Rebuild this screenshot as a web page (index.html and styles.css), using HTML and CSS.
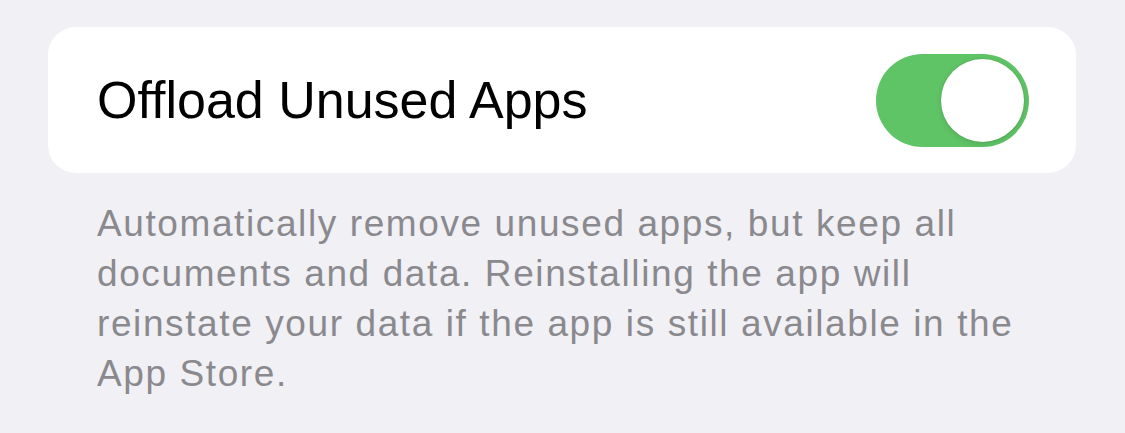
FILE: index.html
```html
<!DOCTYPE html>
<html lang="en">
<head>
<meta charset="UTF-8">
<title>Offload Unused Apps</title>
<link rel="stylesheet" href="styles.css">
</head>
<body>
<div class="page">
  <div class="card">
    <div class="row">
      <span class="label">Offload Unused Apps</span>
      <div class="toggle on"><div class="knob"></div></div>
    </div>
  </div>
  <p class="footer">Automatically remove unused apps, but keep all<br>documents and data. Reinstalling the app will<br>reinstate your data if the app is still available in the<br>App Store.</p>
</div>
</body>
</html>
```

FILE: styles.css
```css
body { margin: 0; background: #f1f0f5; font-family: "Liberation Sans", Arial, sans-serif; }
.page { padding: 27px 49px 0 48px; }
.card { background: #fff; border-radius: 28px; height: 146px; }
.row { display: flex; align-items: center; justify-content: space-between; height: 100%; padding: 0 47px 0 49px; box-sizing: border-box; }
.label { font-size: 52px; color: #000; }
.toggle { width: 153px; height: 93px; border-radius: 47px; background: #5fc466; position: relative; }
.toggle .knob { position: absolute; top: 5px; right: 5px; width: 83px; height: 83px; border-radius: 50%; background: #fff; box-shadow: 0 2px 6px rgba(0, 0, 0, 0.12), 0 0 0 1px rgba(0, 0, 0, 0.04); }
.footer { margin: 26px 0 0 49px; font-size: 37px; letter-spacing: 1.6px; line-height: 50px; color: #8a898e; }
```
